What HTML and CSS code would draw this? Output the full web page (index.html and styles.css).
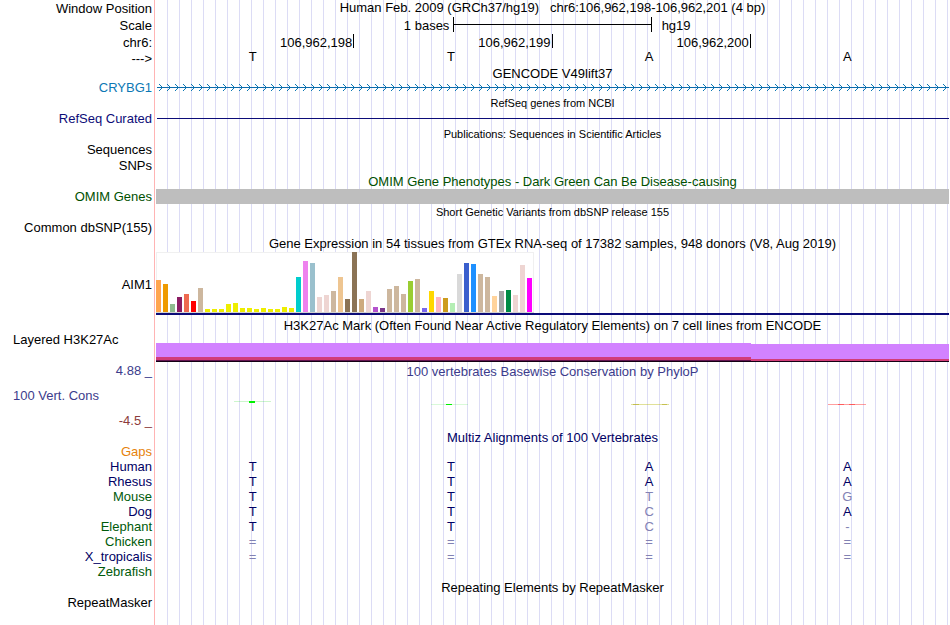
FILE: index.html
```
<!doctype html>
<html lang="en">
	<head>
		<meta charset="utf-8">
		<title>Human chr6:106,962,198-106,962,201</title>
		<link rel="stylesheet" href="styles.css">
	</head>
	<body>
		<main class="browser">
			<!-- Position and ruler -->
			<div class="row h17"><div class="label">Window Position</div><h1 class="title top">Human Feb. 2009 (GRCh37/hg19) &nbsp; chr6:106,962,198-106,962,201 (4 bp)</h1></div>
			<div class="row h17">
				<div class="label">Scale</div>
				<div class="scale"><span class="scale-left">1 bases</span><span class="scale-bar"></span><span class="scale-right">hg19</span></div>
			</div>
			<div class="row h17">
				<div class="label">chr6:</div>
				<div class="ruler"><span>106,962,198</span><span>106,962,199</span><span>106,962,200</span></div>
			</div>
			<div class="row h15">
				<div class="label">---&gt;</div>
				<div class="bases"><span>T</span><span>T</span><span>A</span><span>A</span></div>
			</div>

			<!-- Gene tracks -->
			<div class="row h14"><h2 class="title">GENCODE V49lift37</h2></div>
			<div class="row h15">
				<div class="label gencode">CRYBG1</div>
				<svg class="gene" width="100%" height="15">
					<defs>
						<pattern id="arrows" x="3" width="8" height="15" patternUnits="userSpaceOnUse">
							<path d="M0 4h1v1h-1zM1 5h1v1h-1zM2 6h1v1h-1zM3 7h1v1h-1zM2 8h1v1h-1zM1 9h1v1h-1zM0 10h1v1h-1z" fill="#0c78b4"/>
						</pattern>
					</defs>
					<rect x="1" width="100%" height="15" fill="url(#arrows)"/>
					<rect x="1" y="7" width="100%" height="1" fill="#0c6cac"/>
				</svg>
			</div>
			<div class="row h16"><h2 class="title small">RefSeq genes from NCBI</h2></div>
			<div class="row h15"><div class="label refseq">RefSeq Curated</div><div class="refseq-line"></div></div>
			<div class="row h16"><h2 class="title small">Publications: Sequences in Scientific Articles</h2></div>
			<div class="row h15"><div class="label">Sequences</div></div>
			<div class="row h17"><div class="label">SNPs</div></div>
			<div class="row h15"><h2 class="title omim">OMIM Gene Phenotypes - Dark Green Can Be Disease-causing</h2></div>
			<div class="row h15"><div class="label omim">OMIM Genes</div><div class="omim-bar"></div></div>
			<div class="row h16"><h2 class="title small">Short Genetic Variants from dbSNP release 155</h2></div>
			<div class="row h15"><div class="label">Common dbSNP(155)</div></div>
			<div class="row h17"><h2 class="title">Gene Expression in 54 tissues from GTEx RNA-seq of 17382 samples, 948 donors (V8, Aug 2019)</h2></div>

			<!-- GTEx expression, one bar per tissue -->
			<div class="row gtex">
				<div class="label">AIM1</div>
				<div class="gtex-line"><svg id="gtex" width="378" height="61"></svg></div>
			</div>

			<!-- Regulation -->
			<div class="row h16 gap-top"><h2 class="title">H3K27Ac Mark (Often Found Near Active Regulatory Elements) on 7 cell lines from ENCODE</h2></div>
			<div class="row h3k">
				<div class="label left">Layered H3K27Ac</div>
				<div class="layers"><div class="layer high"></div><div class="layer low-signal"></div></div>
			</div>

			<!-- Conservation -->
			<div class="row cons">
				<div class="cons-labels">
					<div class="label phylop">4.88 _</div>
					<div class="label left phylop">100 Vert. Cons</div>
					<div class="label negative">-4.5 _</div>
				</div>
				<div class="cons-data">
					<h2 class="title phylop">100 vertebrates Basewise Conservation by PhyloP</h2>
					<div class="signals">
						<svg width="42" height="6"><path d="M0 1h37v1h-37z" fill="#00d000" opacity=".2"/><path d="M15 1h6v2h-6z" fill="#00f000"/></svg>
						<svg width="42" height="6"><path d="M0 4h37v1h-37z" fill="#00e000" opacity=".15"/><path d="M15 4h6v1h-6z" fill="#00f000"/></svg>
						<svg width="38" height="6"><path d="M0 4h38v1h-38z" fill="#b4b400" opacity=".4"/><path d="M2 4h6v1h-6zM31 4h5v1h-5z" fill="#b4aa20" opacity=".6"/></svg>
						<svg width="38" height="6"><path d="M0 4h38v1h-38z" fill="#ff4040" opacity=".5"/><path d="M10 4h6v1h-6zM21 4h6v1h-6z" fill="#ff3030" opacity=".6"/></svg>
					</div>
				</div>
			</div>
			<div class="row h14"><h2 class="title navy">Multiz Alignments of 100 Vertebrates</h2></div>
			<table class="alignment">
				<tbody>
					<tr class="gaps"><th scope="row">Gaps</th><td></td><td></td><td></td><td></td></tr>
					<tr><th scope="row">Human</th><td>T</td><td>T</td><td>A</td><td>A</td></tr>
					<tr><th scope="row">Rhesus</th><td>T</td><td>T</td><td>A</td><td>A</td></tr>
					<tr class="alt"><th scope="row">Mouse</th><td>T</td><td>T</td><td class="diff">T</td><td class="diff">G</td></tr>
					<tr><th scope="row">Dog</th><td>T</td><td>T</td><td class="diff">C</td><td>A</td></tr>
					<tr class="alt"><th scope="row">Elephant</th><td>T</td><td>T</td><td class="diff">C</td><td class="diff">-</td></tr>
					<tr class="alt"><th scope="row">Chicken</th><td class="diff">=</td><td class="diff">=</td><td class="diff">=</td><td class="diff">=</td></tr>
					<tr><th scope="row">X_tropicalis</th><td class="diff">=</td><td class="diff">=</td><td class="diff">=</td><td class="diff">=</td></tr>
					<tr class="alt"><th scope="row">Zebrafish</th><td></td><td></td><td></td><td></td></tr>
				</tbody>
			</table>
			<div class="row h16"><h2 class="title">Repeating Elements by RepeatMasker</h2></div>
			<div class="row h15"><div class="label">RepeatMasker</div></div>
		</main>
		<script src="gtex.js"></script>
	</body>
</html>
```
FILE: styles.css
```
* {
	box-sizing: border-box;
	margin: 0px;
	padding: 0px;
}
body {
	background: white;
	color: black;
	font-family: "Liberation Sans", Arial, sans-serif;
	font-size: 13px;
	line-height: 15px;
}
/* Guide lines behind the tracks, red line after the labels */
.browser {
	min-height: 100vh;
	background:
		linear-gradient(#ffb4b4, #ffb4b4) 154px 0px / 1px 100% no-repeat,
		repeating-linear-gradient(to right, #dcdcf5 0px 1px, transparent 1px 12px) 167px 0px no-repeat;
}
.row {
	display: grid;
	grid-template-columns: 156px 1fr;
	padding-right: 1px;
}
.h14 {
	height: 14px;
}
.h15 {
	height: 15px;
}
.h16 {
	height: 16px;
	line-height: 17px;
}
.h17 {
	height: 17px;
	line-height: 17px;
}
.gap-top {
	margin-top: 2px;
}
.label {
	grid-column: 1;
	padding-right: 4px;
	text-align: right;
	white-space: nowrap;
}
.label.left {
	padding-left: 13px;
	text-align: left;
}
.title {
	grid-column: 2;
	font-size: 13px;
	font-weight: normal;
	text-align: center;
	white-space: nowrap;
}
.top {
	line-height: 15px;
}
.small {
	font-size: 11px;
}
.gencode {
	color: #0c78b4;
}
.refseq {
	color: #0c0c78;
}
.omim {
	color: #005000;
}
.phylop {
	color: #3c3c8c;
}
.negative {
	color: #8c3c3c;
}
.navy {
	color: #000064;
}
/* Scale and ruler */
.scale {
	display: grid;
	grid-template-columns: 1fr 25% 1fr;
}
.scale-left {
	padding-right: 4px;
	text-align: right;
}
.scale-right {
	padding-left: 10px;
}
.scale-bar {
	height: 15px;
	border: solid black;
	border-width: 0px 1px;
	background: linear-gradient(black, black) 0px 7px / 100% 1px no-repeat;
}
.ruler, .bases, .signals {
	display: grid;
	grid-template-columns: repeat(4, 1fr);
}
.ruler span {
	height: 14px;
	padding-right: 1px;
	border-right: 1px solid black;
	text-align: right;
}
.bases {
	line-height: 11px;
}
.bases span {
	padding-right: 5px;
	text-align: center;
}
/* Track contents */
.gene {
	display: block;
}
.refseq-line {
	height: 1px;
	margin: 7px 0px 0px 1px;
	background: #0c0c78;
}
.omim-bar {
	background: #bebebe;
}
.gtex {
	height: 63px;
}
.gtex .label {
	line-height: 65px;
}
.gtex-line {
	height: 63px;
	border-bottom: 2px solid #0c0c78;
}
.gtex-line svg {
	display: block;
	background: white;
}
.h3k .label {
	line-height: 13px;
}
.layers {
	display: grid;
	grid-template-columns: 3fr 1fr;
	height: 19px;
	margin-top: 10px;
}
.high {
	background: linear-gradient(#d282ff 14px, #d23c78 14px 17px, #641450 17px 18px, #140014 18px);
}
.low-signal {
	margin-top: 1px;
	background: linear-gradient(#d282ff 15px, #d23c78 15px 17px, #140014 17px);
}
.cons-labels {
	display: flex;
	flex-direction: column;
	gap: 10px;
	padding: 1px 0px 2px;
}
.cons-data {
	padding-top: 2px;
}
.signals {
	margin-top: 21px;
	padding-right: 3px;
	justify-items: center;
}
.signals svg {
	shape-rendering: crispEdges;
}
/* Multiple alignment */
.alignment {
	width: 100%;
	padding-right: 1px;
	border-spacing: 0px;
	table-layout: fixed;
	color: #000064;
}
.alignment th {
	width: 156px;
	height: 15px;
	padding-right: 4px;
	font-weight: normal;
	text-align: right;
}
.alignment td {
	padding-right: 5px;
	text-align: center;
}
.alt th {
	color: #005a0a;
}
.gaps th {
	color: #e6820a;
}
.alignment .diff {
	color: #8282b4;
}
```
FILE: gtex.js
```
// Height and colour for each tissue
const tissues = [
	[32, "#ffa54f"], [28, "#ee9a00"], [8, "#8fbc8f"], [15, "#8b1c62"], [18, "#ee6a50"], [11, "#ff0000"],
	[24, "#cdb79e"], [3, "#eeee00"], [3, "#eeee00"], [3, "#eeee00"], [8, "#eeee00"], [9, "#eeee00"],
	[4, "#eeee00"], [4, "#eeee00"], [3, "#eeee00"], [4, "#eeee00"], [3, "#eeee00"], [3, "#eeee00"],
	[5, "#eeee00"], [4, "#eeee00"], [35, "#00cdcd"], [51, "#ee82ee"], [49, "#9ac0cd"], [15, "#eed5d2"],
	[17, "#eed5d2"], [21, "#cdb79e"], [35, "#eec591"], [13, "#8b7355"], [60, "#8b7355"], [13, "#cdaa7d"],
	[21, "#eed5d2"], [5, "#b452cd"], [4, "#7a378b"], [23, "#cdb79e"], [26, "#cdb79e"], [18, "#cdb79e"],
	[31, "#9acd32"], [33, "#cdb79e"], [4, "#7a67ee"], [21, "#ffd700"], [15, "#ffb6c1"], [14, "#cd9b1d"],
	[9, "#b4eeb4"], [38, "#d9d9d9"], [49, "#3a5fcd"], [48, "#1e90ff"], [38, "#cdb79e"], [35, "#cdb79e"],
	[16, "#ffd39b"], [21, "#a6a6a6"], [22, "#008b45"], [17, "#eed5d2"], [47, "#eed5d2"], [34, "#ff00ff"]
];
const chart = document.getElementById("gtex");

function rect(x, y, width, height, fill) {
	const r = document.createElementNS("http://www.w3.org/2000/svg", "rect");
	Object.entries({ x, y, width, height, fill }).forEach(([k, v]) => r.setAttribute(k, v));
	chart.appendChild(r);
}

// Frame and baseline
rect(0, 0, 378, 1, "#f0f0f0");
rect(0, 0, 1, 60, "#f0f0f0");
rect(377, 0, 1, 60, "#f0f0f0");
rect(0, 60, 378, 1, "#d2d2d2");
tissues.forEach(([height, fill], i) => rect(i * 7, 60 - height, 5, height, fill));
```
